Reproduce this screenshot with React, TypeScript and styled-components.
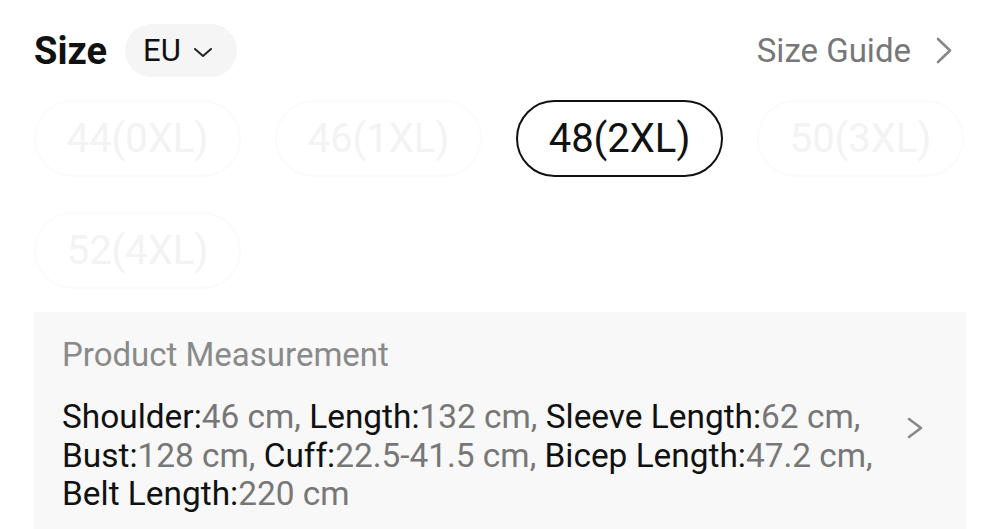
import React from 'react';
import styled, { createGlobalStyle } from 'styled-components';

const GlobalStyle = createGlobalStyle`
    html, body {
        margin: 0;
        padding: 0;
        background: #ffffff;
        font-family: Roboto, "Noto Sans", "Liberation Sans", sans-serif;
    }
`;

interface Measure {
    label: string;
    value: string;
}

const sizes = ['44(0XL)', '46(1XL)', '48(2XL)', '50(3XL)', '52(4XL)'];

const measures: Measure[] = [
    { label: 'Shoulder', value: '46 cm' },
    { label: 'Length', value: '132 cm' },
    { label: 'Sleeve Length', value: '62 cm' },
    { label: 'Bust', value: '128 cm' },
    { label: 'Cuff', value: '22.5-41.5 cm' },
    { label: 'Bicep Length', value: '47.2 cm' },
    { label: 'Belt Length', value: '220 cm' },
];

const Page = styled.div`
    display: flex;
    flex-direction: column;
    gap: 23px;
    padding: 24px 34px 0;
    height: 529px;
    box-sizing: border-box;
    overflow: hidden;
`;

const Header = styled.div`
    display: flex;
    align-items: center;
    justify-content: space-between;
    height: 53px;
`;

const TitleGroup = styled.div`
    display: flex;
    align-items: center;
    gap: 18px;
`;

const Title = styled.h2`
    margin: 0;
    font-size: 38px;
    font-weight: 700;
    color: #111;
    line-height: 1;
`;

const RegionPill = styled.button`
    display: flex;
    align-items: center;
    gap: 12px;
    height: 53px;
    padding: 0 24px 0 18px;
    border: none;
    border-radius: 27px;
    background: #f5f5f5;
    font-family: inherit;
    font-size: 31px;
    color: #111;

    svg {
        margin-top: 4px;
    }
`;

const GuideLink = styled.a`
    display: flex;
    align-items: center;
    gap: 25px;
    padding-right: 14px;
    font-size: 33px;
    color: #777;
    text-decoration: none;
`;

const SizeGrid = styled.div`
    display: grid;
    grid-template-columns: repeat(4, 207px);
    column-gap: 34px;
    row-gap: 35px;
`;

const SizeChip = styled.div<{ $active?: boolean }>`
    display: flex;
    align-items: center;
    justify-content: center;
    height: 77px;
    box-sizing: border-box;
    border-radius: 39px;
    border: 2.5px solid ${({ $active }) => ($active ? '#111' : '#fbfbfb')};
    font-size: 40px;
    color: ${({ $active }) => ($active ? '#111' : '#f3f3f3')};
`;

const Panel = styled.div`
    display: flex;
    flex-direction: column;
    gap: 22px;
    flex: 1;
    padding: 23px 43px 0 28px;
    background: #f8f8f8;
`;

const PanelTitle = styled.div`
    font-size: 33px;
    line-height: 40px;
    color: #8a8a8a;
`;

const PanelBody = styled.div`
    display: flex;
    align-items: flex-start;
    gap: 18px;
`;

const MeasureText = styled.p`
    flex: 1;
    margin: 0;
    padding-top: 1px;
    font-size: 33.4px;
    line-height: 38.5px;
    color: #111;
`;

const Value = styled.span`
    color: #777;
`;

const ArrowBox = styled.div`
    display: flex;
    padding-top: 20px;
`;

const ChevronRight = ({ w, h, color }: { w: number; h: number; color: string }) => (
    <svg width={w} height={h} viewBox={`0 0 ${w} ${h}`} fill="none">
        <path
            d={`M2 2L${w - 2} ${h / 2}L2 ${h - 2}`}
            stroke={color}
            strokeWidth="2.6"
            strokeLinecap="round"
            strokeLinejoin="round"
        />
    </svg>
);

const App = () => {
    const [active] = React.useState('48(2XL)');

    return (
        <>
            <GlobalStyle />
            <Page>
                <Header>
                    <TitleGroup>
                        <Title>Size</Title>
                        <RegionPill>
                            EU
                            <svg width="20" height="11" viewBox="0 0 20 11" fill="none">
                                <path d="M2 2l8 7 8-7" stroke="#222" strokeWidth="2" strokeLinecap="round" strokeLinejoin="round" />
                            </svg>
                        </RegionPill>
                    </TitleGroup>
                    <GuideLink>
                        Size Guide
                        <ChevronRight w={16} h={27} color="#888" />
                    </GuideLink>
                </Header>
                <SizeGrid>
                    {sizes.map(s => (
                        <SizeChip key={s} $active={s === active}>{s}</SizeChip>
                    ))}
                </SizeGrid>
                <Panel>
                    <PanelTitle>Product Measurement</PanelTitle>
                    <PanelBody>
                        <MeasureText>
                            {measures.map((m, i) => (
                                <React.Fragment key={m.label}>
                                    {m.label}:<Value>{m.value}{i < measures.length - 1 ? ',' : ''}</Value>{' '}
                                </React.Fragment>
                            ))}
                        </MeasureText>
                        <ArrowBox>
                            <ChevronRight w={16} h={22} color="#888" />
                        </ArrowBox>
                    </PanelBody>
                </Panel>
            </Page>
        </>
    );
};

export default App;
